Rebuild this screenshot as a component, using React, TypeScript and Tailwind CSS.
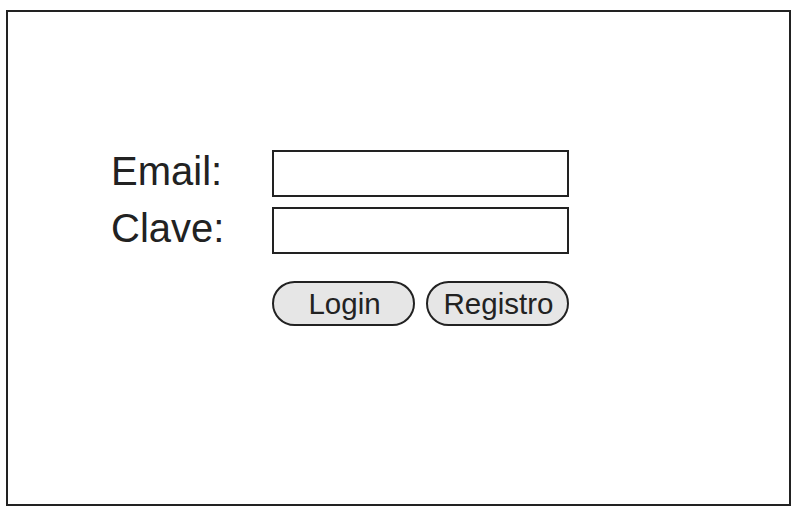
import React from "react";

export default function App() {
  return (
    <div
      className="w-[796px] h-[516px] bg-white pt-[10px] pl-[6px]"
      style={{ fontFamily: '"Liberation Sans", Arial, sans-serif' }}
    >
      <div className="w-[785px] h-[496px] border-2 border-[#222222] pt-[138px] pl-[103px] text-[#222222]">
        <div className="flex flex-col gap-[10px]">
          <div className="flex items-start">
            <label className="w-[161px] text-[40px] leading-[43px]">Email:</label>
            <input
              type="text"
              className="w-[297px] h-[47px] border-2 border-[#222222] bg-white outline-none"
            />
          </div>
          <div className="flex items-start">
            <label className="w-[161px] text-[40px] leading-[43px]">Clave:</label>
            <input
              type="password"
              className="w-[297px] h-[47px] border-2 border-[#222222] bg-white outline-none"
            />
          </div>
        </div>
        <div className="flex gap-[11px] ml-[161px] mt-[27px]">
          <button className="w-[143px] h-[45px] rounded-full border-2 border-[#222222] bg-[#e6e6e6] text-[29.5px] leading-none pl-[2px]">
            Login
          </button>
          <button className="w-[143px] h-[45px] rounded-full border-2 border-[#222222] bg-[#e6e6e6] text-[29.5px] leading-none pl-[2px]">
            Registro
          </button>
        </div>
      </div>
    </div>
  );
}
